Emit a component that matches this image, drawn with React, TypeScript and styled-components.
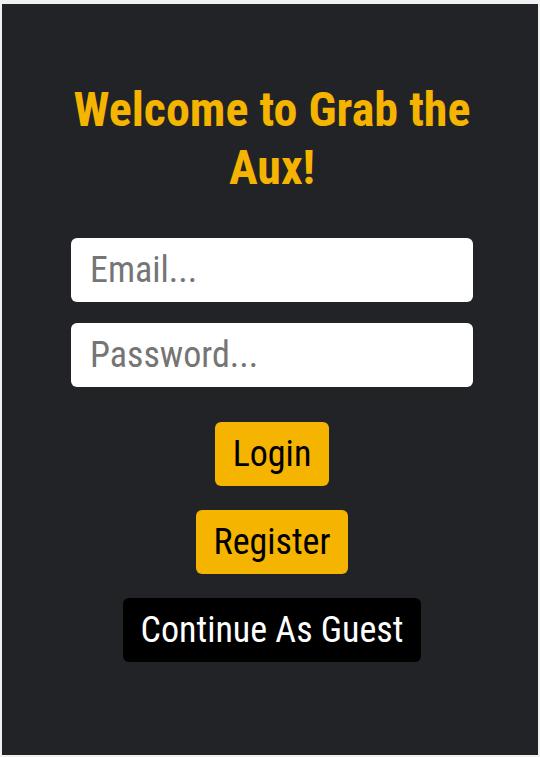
import React from "react";
import styled, { createGlobalStyle, css } from "styled-components";

const GlobalStyle = createGlobalStyle`
  html, body {
    margin: 0;
    padding: 0;
    background: #f1f1f1;
  }
  * { box-sizing: border-box; }
`;

const FONT = `"Roboto Condensed", "Roboto", "Liberation Sans Narrow", sans-serif`;

const Panel = styled.main`
  margin: 4px 2px 2px 2px;
  height: 751px;
  background: #222326;
  display: flex;
  flex-direction: column;
  align-items: center;
  padding: 77px 0 0 4px;
  font-family: ${FONT};
  font-stretch: 85%;
`;

const Title = styled.h1`
  width: 402px;
  margin: 0;
  font-size: 48px;
  font-weight: 700;
  line-height: 58px;
  color: #f5b400;
  text-align: center;
`;

const Form = styled.form`
  width: 402px;
  margin-top: 41px;
  display: flex;
  flex-direction: column;
  align-items: center;
`;

const Fields = styled.div`
  width: 100%;
  display: flex;
  flex-direction: column;
  gap: 21px;
`;

const Input = styled.input`
  width: 100%;
  height: 64px;
  border: none;
  border-radius: 6px;
  background: #ffffff;
  padding: 0 19px;
  font-family: ${FONT};
  font-stretch: 85%;
  font-size: 36px;
  color: #222;
  outline: none;
  &::placeholder {
    color: #757575;
  }
`;

const Actions = styled.div`
  margin-top: 35px;
  display: flex;
  flex-direction: column;
  align-items: center;
  gap: 24px;
`;

const Button = styled.button<{ $variant: "primary" | "dark" }>`
  height: 64px;
  padding: 0 18px;
  border: none;
  border-radius: 6px;
  font-family: ${FONT};
  font-stretch: 85%;
  font-size: 36px;
  font-weight: 400;
  cursor: pointer;
  ${(p) =>
    p.$variant === "primary"
      ? css`
          background: #f5b400;
          color: #000;
        `
      : css`
          background: #000;
          color: #fff;
        `}
`;

export default function App() {
  return (
    <>
      <GlobalStyle />
      <Panel>
        <Title>Welcome to Grab the Aux!</Title>
        <Form onSubmit={(e) => e.preventDefault()}>
          <Fields>
            <Input type="email" placeholder="Email..." />
            <Input type="password" placeholder="Password..." />
          </Fields>
          <Actions>
            <Button type="submit" $variant="primary">Login</Button>
            <Button type="button" $variant="primary">Register</Button>
            <Button type="button" $variant="dark">Continue As Guest</Button>
          </Actions>
        </Form>
      </Panel>
    </>
  );
}
